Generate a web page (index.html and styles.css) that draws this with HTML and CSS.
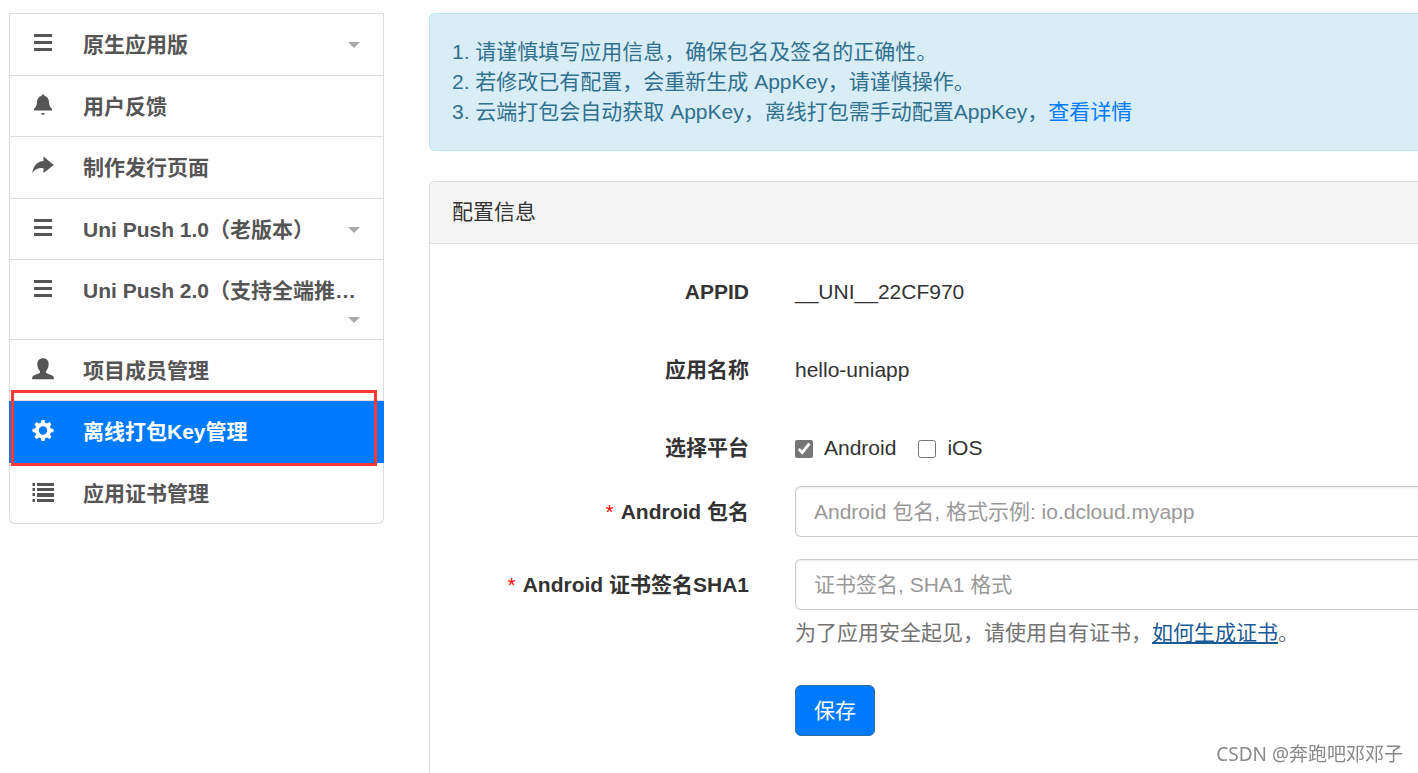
FILE: index.html
```html
<!DOCTYPE html>
<html lang="zh-CN">
<head>
<meta charset="utf-8">
<title>离线打包Key管理</title>
<link rel="stylesheet" href="styles.css">
</head>
<body>
<svg class="sprite" aria-hidden="true">
  <symbol id="i-menu" viewBox="0 0 22 22"><path d="M2 2h18v3H2zM2 9h18v3H2zM2 16h18v3H2z"/></symbol>
  <symbol id="i-bell" viewBox="0 0 22 22"><path d="M11 0.500c1 0 1.600.6 1.600 1.500C15.700 2.800 16.800 5.100 17 8c.2 3.600 1 5.200 2.800 6.500.5.400.4 1.500-.2 1.900H2.400c-.6-.4-.7-1.500-.2-1.900C4 13.200 4.800 11.600 5 8c.2-2.900 1.300-5.200 4.400-6C9.400 1.100 10 .5 11 .5zM9.200 19h3.600c-.4 1.300-1 1.800-1.800 1.800s-1.400-.5-1.800-1.800z"/></symbol>
  <symbol id="i-share" viewBox="0 0 22 22"><path d="M11.500 1.500 21.800 10 11.500 18v-4.800C6.500 12.700 3 14.200.3 18 1.200 11 5.200 6.500 11.500 6z"/></symbol>
  <symbol id="i-user" viewBox="0 0 22 22"><path d="M11 .3c3.700 0 5.700 2.500 5.700 5.800 0 2.900-1 5.400-2.600 6.900v1.800c1.900 1.500 6.200 2.200 7.300 3.700.4.600.5 1.500.5 2.800H.1c0-1.300.1-2.200.5-2.800 1.100-1.500 5.400-2.200 7.300-3.700V13C6.300 11.500 5.300 9 5.300 6.100 5.300 2.800 7.300.3 11 .3z"/></symbol>
  <symbol id="i-cog" viewBox="0 0 22 22"><path fill-rule="evenodd" d="M9.500 1h3l.6 2.800 2 .8L17.500 3l2 2.200-1.500 2.300.8 2 2.700.5v3l-2.700.6-.8 2 1.500 2.300-2.100 2.100-2.300-1.500-2 .8-.6 2.700h-3l-.6-2.700-2-.8L4.600 20l-2.100-2.100L4 15.600l-.8-2L.5 13v-3l2.700-.5.8-2-1.500-2.300L4.600 3l2.300 1.600 2-.8zM11 7.300a4.200 4.200 0 1 0 0 8.400 4.200 4.200 0 0 0 0-8.400z"/></symbol>
  <symbol id="i-list" viewBox="0 0 22 22"><path d="M.5 2H3v3H.5zM5 2h17v3H5zM.5 7H3v3H.5zM5 7h17v3H5zM.5 12H3v3H.5zM5 12h17v4H5zM.5 18H3v3H.5zM5 18h17v3H5z"/></symbol>
</svg>
<div class="layout">
  <nav class="sidebar">
    <ul class="menu">
      <li class="menu-item"><a class="menu-link" href="#"><svg class="icon"><use href="#i-menu"/></svg><span class="menu-text">原生应用版</span><span class="caret"></span></a></li>
      <li class="menu-item"><a class="menu-link" href="#"><svg class="icon"><use href="#i-bell"/></svg><span class="menu-text">用户反馈</span></a></li>
      <li class="menu-item"><a class="menu-link" href="#"><svg class="icon"><use href="#i-share"/></svg><span class="menu-text">制作发行页面</span></a></li>
      <li class="menu-item"><a class="menu-link" href="#"><svg class="icon"><use href="#i-menu"/></svg><span class="menu-text">Uni Push 1.0（老版本）</span><span class="caret"></span></a></li>
      <li class="menu-item"><a class="menu-link" href="#"><svg class="icon"><use href="#i-menu"/></svg><span class="menu-text">Uni Push 2.0（支持全端推…</span><span class="caret"></span></a></li>
      <li class="menu-item"><a class="menu-link" href="#"><svg class="icon"><use href="#i-user"/></svg><span class="menu-text">项目成员管理</span></a></li>
      <li class="menu-item active"><a class="menu-link" href="#"><svg class="icon"><use href="#i-cog"/></svg><span class="menu-text">离线打包Key管理</span></a><span class="highlight"></span></li>
      <li class="menu-item"><a class="menu-link" href="#"><svg class="icon"><use href="#i-list"/></svg><span class="menu-text">应用证书管理</span></a></li>
    </ul>
  </nav>
  <main class="main">
    <div class="notice">
      <p>1. 请谨慎填写应用信息，确保包名及签名的正确性。</p>
      <p>2. 若修改已有配置，会重新生成 AppKey，请谨慎操作。</p>
      <p>3. 云端打包会自动获取 AppKey，离线打包需手动配置AppKey，<a class="notice-link" href="#">查看详情</a></p>
    </div>
    <section class="panel">
      <h2 class="panel-title">配置信息</h2>
      <form class="form">
        <div class="row static"><span class="label">APPID</span><span class="value">__UNI__22CF970</span></div>
        <div class="row static"><span class="label">应用名称</span><span class="value">hello-uniapp</span></div>
        <div class="row" role="group" aria-labelledby="platform">
          <span class="label" id="platform">选择平台</span>
          <div class="value checks">
            <label class="check"><input type="checkbox" class="box" checked>Android</label>
            <label class="check"><input type="checkbox" class="box">iOS</label>
          </div>
        </div>
        <div class="row">
          <label class="label" for="pkg"><span class="required">*</span> Android 包名</label>
          <input class="input" id="pkg" type="text" placeholder="Android 包名, 格式示例: io.dcloud.myapp">
        </div>
        <div class="row">
          <label class="label" for="sha"><span class="required">*</span> Android 证书签名SHA1</label>
          <div class="field">
            <input class="input" id="sha" type="text" placeholder="证书签名, SHA1 格式">
            <p class="help">为了应用安全起见，请使用自有证书，<a class="help-link" href="#">如何生成证书</a>。</p>
          </div>
        </div>
        <div class="row actions"><button class="save" type="button">保存</button></div>
      </form>
    </section>
  </main>
</div>
<div class="watermark">CSDN @奔跑吧邓邓子</div>
</body>
</html>
```
FILE: styles.css
```css
* { box-sizing: border-box; }

body {
  margin: 0;
  background: #fefefe;
  color: #333;
  font: 21px/30px "Liberation Sans", "Noto Sans CJK SC", sans-serif;
}

p, h2, ul { margin: 0; padding: 0; }

.sprite { position: absolute; width: 0; height: 0; }

.layout {
  display: flex;
  gap: 45px;
  min-height: 100vh;
  padding: 13px 0 0 9px;
}

.sidebar { flex: 0 0 375px; }

.menu {
  list-style: none;
  border-top: 1px solid #ddd;
}

.menu-item {
  position: relative;
  min-height: 61px;
  border: 1px solid #ddd;
  border-top: 0;
}

.menu-item:nth-child(odd) { min-height: 62px; }

.menu-item:last-child { border-radius: 0 0 6px 6px; }

.menu-link {
  display: flex;
  flex-wrap: wrap;
  align-items: center;
  row-gap: 9px;
  padding: 16px 23px 14px 22px;
  color: #555;
  font-weight: bold;
  text-decoration: none;
}

.icon {
  width: 22px;
  height: 22px;
  margin: 0 29px 4px 0;
  fill: currentColor;
}

.menu-text { white-space: nowrap; }

.caret {
  width: 12px;
  margin: 2px 0 2px auto;
  border: 6px solid transparent;
  border-top-color: #aaa;
  border-bottom: 0;
}

.active {
  background: #007aff;
  border-color: #007aff;
}

.active .menu-link { color: #fff; }

.highlight {
  position: absolute;
  inset: -11px 6px -4px 1px;
  border: 3px solid #ff3838;
  z-index: 1;
}

.main {
  display: flex;
  flex: 1;
  flex-direction: column;
  gap: 30px;
  min-width: 0;
}

.notice {
  padding: 23px 22px;
  background: #d9edf7;
  border: 1px solid #bce8f1;
  border-right: 0;
  border-radius: 6px 0 0 6px;
  color: #31708f;
}

.notice-link { color: #007aff; text-decoration: none; }

.panel {
  flex: 1;
  background: #fff;
  border: 1px solid #ddd;
  border-width: 1px 0 0 1px;
  border-radius: 6px 0 0 0;
}

.panel-title {
  padding: 15px 22px 16px;
  background: #f5f5f5;
  border-bottom: 1px solid #ddd;
  border-radius: 5px 0 0 0;
  font-size: 21px;
  font-weight: normal;
}

.form {
  display: flex;
  flex-direction: column;
  gap: 22px;
  padding: 22px 0 22px 22px;
}

.row {
  display: grid;
  grid-template-columns: 297px 1fr;
  column-gap: 46px;
  align-items: start;
}

.static { padding-bottom: 15px; }

.label {
  padding-top: 11px;
  font-weight: bold;
  text-align: right;
}

.required {
  margin-right: 2px;
  color: #f00;
  font-weight: normal;
}

.value { padding-top: 11px; }

.checks { display: flex; gap: 22px; padding-bottom: 1px; }

.check { display: flex; align-items: center; gap: 11px; }

.box {
  width: 18px;
  height: 18px;
  margin: 2px 0 0;
  accent-color: #767676;
}

.input {
  display: block;
  width: 100%;
  height: 51px;
  padding: 8px 18px;
  background: #fff;
  border: 1px solid #ccc;
  border-right: 0;
  border-radius: 6px 0 0 6px;
  box-shadow: inset 0 1px 2px rgba(0, 0, 0, .08);
  color: #555;
  font: inherit;
}

.input::placeholder { color: #999; opacity: 1; }

.help { padding-top: 8px; color: #737373; }

.help-link { color: #1a5a96; text-decoration: underline; }

.actions { padding-top: 15px; }

.save {
  grid-column: 2;
  justify-self: start;
  padding: 10px 18px 9px;
  background: #007aff;
  border: 1px solid #2e6da4;
  border-radius: 6px;
  color: #fff;
  font: inherit;
}

.watermark {
  position: fixed;
  right: 15px;
  bottom: 4px;
  color: #888;
  font: 19px/30px "Noto Sans", "Noto Sans CJK SC", sans-serif;
}
```
